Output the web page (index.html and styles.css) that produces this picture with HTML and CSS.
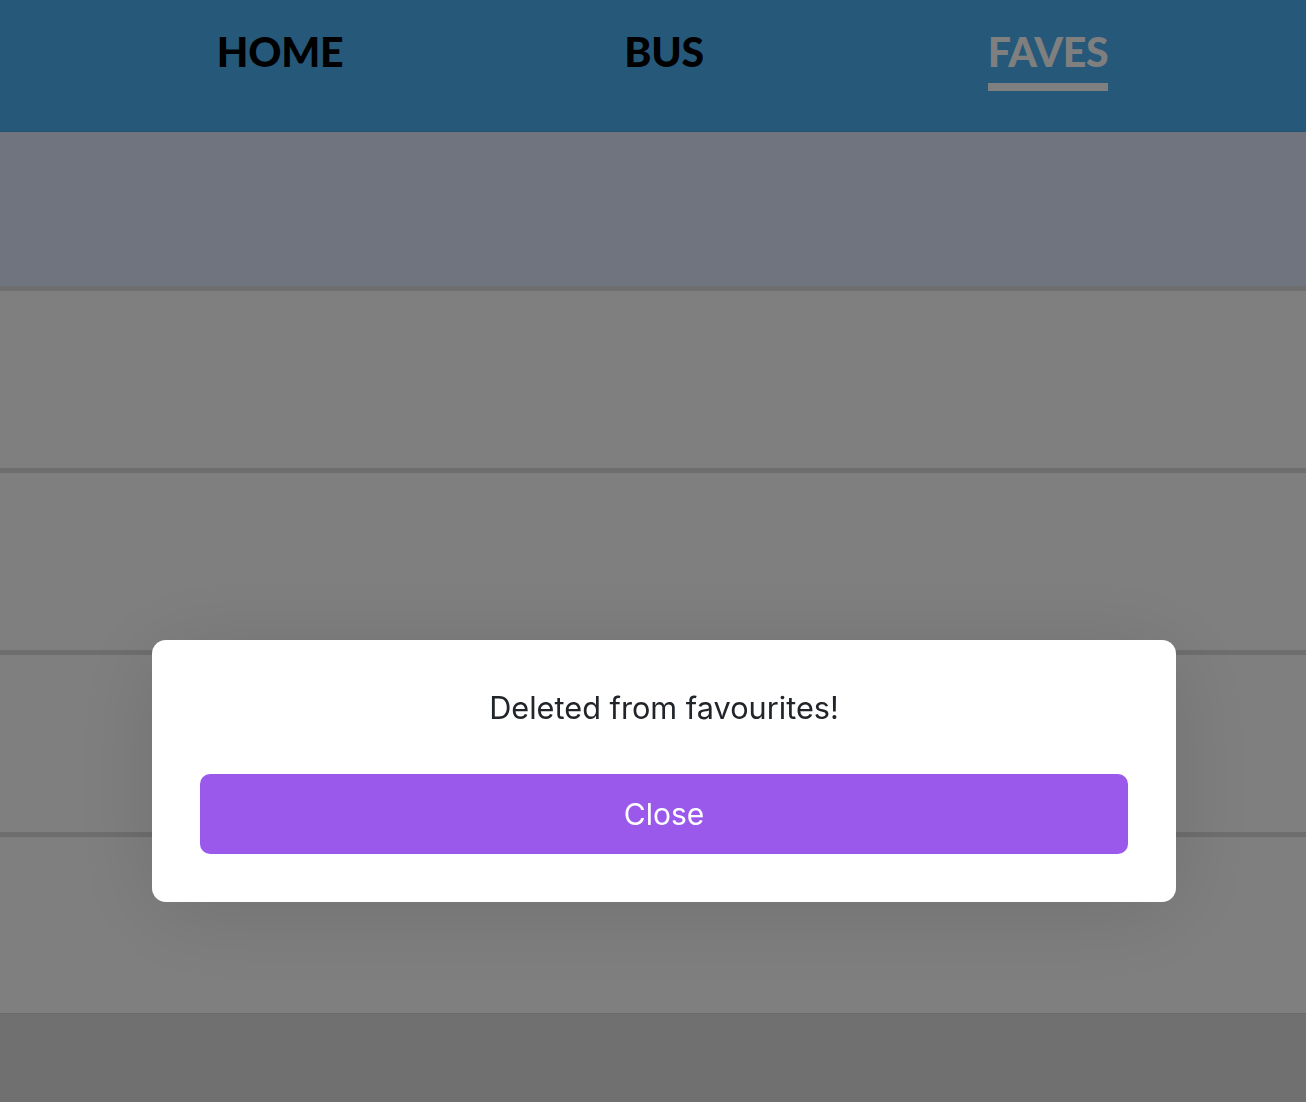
FILE: index.html
```html
<!DOCTYPE html>
<html lang="en">
<head>
<meta charset="utf-8">
<title>Faves</title>
<link rel="stylesheet" href="styles.css">
</head>
<body>
  <header class="topbar">
    <nav class="tabs">
      <a class="tab">HOME</a>
      <a class="tab">BUS</a>
      <a class="tab tab-active">FAVES</a>
    </nav>
  </header>
  <main class="content">
    <section class="banner"></section>
    <ul class="fave-list">
      <li class="fave-row"></li>
      <li class="fave-row"></li>
      <li class="fave-row"></li>
      <li class="fave-row"></li>
    </ul>
  </main>
  <div class="backdrop">
    <div class="dialog">
      <p class="dialog-text">Deleted from favourites!</p>
      <button class="dialog-btn">Close</button>
    </div>
  </div>
</body>
</html>
```
FILE: styles.css
```css
* { box-sizing: border-box; }
html, body { margin: 0; padding: 0; }
body {
  background: #e0e0e0;
  font-family: "Inter", "Liberation Sans", sans-serif;
  min-height: 1102px;
}
.topbar {
  height: 132px;
  background: #4cb0f4;
  border-bottom: 1px solid #4aa6e4;
}
.tabs {
  display: grid;
  grid-template-columns: repeat(3, 384px);
  justify-content: center;
  padding-left: 22px;
  padding-top: 29px;
}
.tab {
  justify-self: center;
  font-family: "Lato", "Liberation Sans", sans-serif;
  font-weight: 900;
  font-size: 41px;
  line-height: 46px;
  color: #000;
  letter-spacing: -0.3px;
  padding-bottom: 8px;
  border-bottom: 8px solid transparent;
}
.tab-active {
  color: #fff;
  border-bottom-color: #fff;
}
.content { display: block; }
.banner {
  height: 154px;
  background: #dee8ff;
}
.fave-list {
  list-style: none;
  margin: 0;
  padding: 0;
}
.fave-row {
  height: 182px;
  background: #fff;
  border-top: 5px solid #dcdcdc;
}
.fave-row:last-child {
  border-bottom: 1px solid #d8d8d8;
}
.backdrop {
  position: fixed;
  inset: 0;
  background: rgba(0, 0, 0, 0.5);
  display: flex;
  justify-content: center;
  align-items: flex-start;
  padding-top: 640px;
  padding-left: 22px;
}
.dialog {
  width: 1024px;
  flex: none;
  background: #fff;
  border-radius: 14px;
  padding: 48px;
  box-shadow: 0 10px 90px rgba(0, 0, 0, 0.12);
  display: flex;
  flex-direction: column;
}
.dialog-text {
  margin: 0 0 36px;
  text-align: center;
  font-size: 30.7px;
  line-height: 40px;
  color: #212529;
}
.dialog-btn {
  height: 80px;
  margin-top: 10px;
  border: 0;
  border-radius: 10px;
  background: #9b59ec;
  color: #fff;
  font-family: "Inter", "Liberation Sans", sans-serif;
  font-size: 30px;
  cursor: pointer;
}
```
